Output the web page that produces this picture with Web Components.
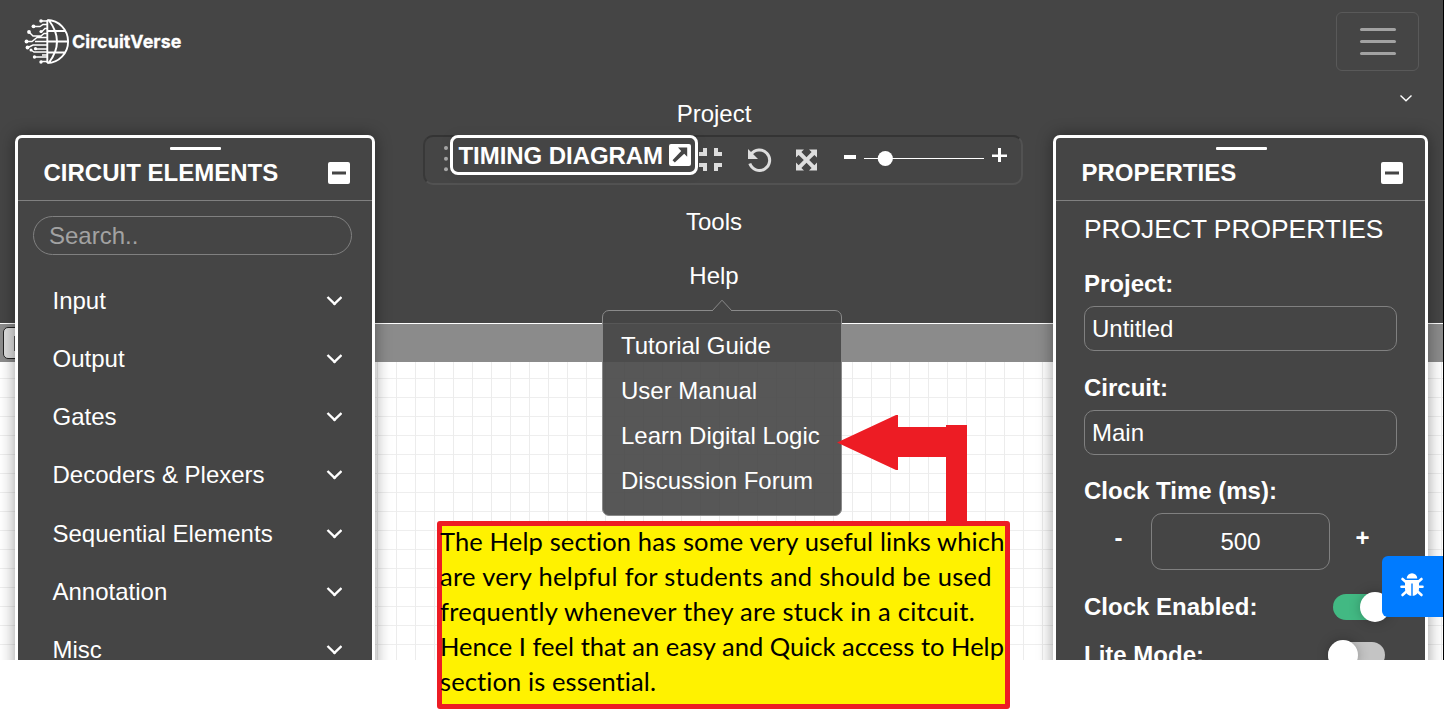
<!DOCTYPE html>
<html lang="en">
<head>
<meta charset="utf-8">
<title>CircuitVerse</title>
<style>
html,body{margin:0;height:100%;background:#fff;overflow:hidden}
body{font-family:"Liberation Sans",Arial,sans-serif;font-size:24px;color:#fff}
</style>
</head>
<body>
<cv-app></cv-app>
<script>
function define(name, html, setup) {
  customElements.define(name, class extends HTMLElement {
    constructor() {
      super();
      const root = this.attachShadow({ mode: 'open' });
      root.innerHTML = '<style>*{box-sizing:border-box}svg{display:block}</style>' + html;
    }
    connectedCallback() { if (setup) setup(this, this.shadowRoot); }
  });
}

/* Single line of text spread over a given width through letter spacing */
define('fit-line', `<style>:host{display:block;white-space:nowrap}span{display:inline-block}</style><span><slot></slot></span>`,
  (el, root) => {
    const s = root.querySelector('span');
    const target = +el.getAttribute('w');
    const n = el.textContent.length;
    const w = s.getBoundingClientRect().width;
    if (w && n) s.style.letterSpacing = ((target - w) / n).toFixed(3) + 'px';
  });

define('cv-logo', `<style>
:host{display:flex;align-items:center;gap:2px;height:48px}
.name{font:700 17.800px/24px Inter,sans-serif;-webkit-text-stroke:.3px #fff;margin-top:1px}
</style>
<svg width="46" height="48" viewBox="0 0 46 48" fill="none" stroke="#fff" stroke-width="1.600">
<g stroke-width="1.900">
<path d="M23.300 3V46M23.300 3A20.800 21.500 0 0 1 23.300 46M25 3.500Q41 24.500 25 45.500M24 14H41M24 24.500H44M24 35.500H41"/></g>
<path stroke-width="1.400" d="M23 4H17M23 7.500H19L16 9.500H9M23 11.500H21L17 15.500M23 16.500H20L17 19H9L5 15M23 20.500H13L8 24.500H2M23 24.500H11M23 28H9L4 30.500M23 32H12M23 35H10L7 33M23 40H10.500M23 38H18M23 44.500H17"/>
<g fill="#fff" stroke="none"><circle cx="17" cy="4" r="1.800"/><circle cx="9.500" cy="9.300" r="1.900"/><circle cx="17" cy="14.500" r="1.600"/><circle cx="5" cy="15" r="1.900"/><circle cx="2.500" cy="24.500" r="1.900"/><circle cx="3.500" cy="30.500" r="1.900"/><circle cx="7" cy="33" r="1.500"/><circle cx="11.500" cy="31.700" r="1.600"/><circle cx="10.500" cy="40" r="1.700"/><circle cx="17" cy="45" r="1.700"/></g>
</svg>
<fit-line class="name" w="109.500">CircuitVerse</fit-line>`);

define('cv-burger', `<style>
:host{display:flex;flex-direction:column;justify-content:center;align-items:center;gap:9px;width:83px;height:59px;border:1px solid #595959;border-radius:6px;box-sizing:border-box}
i{width:36px;height:3px;border-radius:1.500px;background:#a2a2a2}
</style><i></i><i></i><i></i>`);

define('nav-item', `<style>:host{display:block;height:28px;line-height:28px;text-align:center}</style><slot></slot>`);

define('timing-box', `<style>
:host{display:flex;align-items:center;gap:6px;width:248px;height:40px;border:3px solid #fff;border-radius:8px;background:#454545;padding:0 0 0 6px;box-sizing:border-box;font-weight:700;box-shadow:0 0 12px rgba(0,0,0,.08)}
fit-line{margin-top:1px;line-height:28px}
</style><fit-line w="204.500">TIMING DIAGRAM</fit-line>
<svg width="22" height="22" viewBox="0 0 22 22"><rect width="22" height="22" rx="2" fill="#fff"/><path d="M9 3.500h9.200v9.200l-3-3L5.800 18.600 3.500 16.300l8.700-9.400z" fill="#454545"/></svg>`);

define('quick-bar', `<style>
:host{display:block;position:relative;width:600px;height:50px;border:2px solid;border-color:#343434 #525252 #525252 #383838;border-radius:10px;box-sizing:border-box}
.row{display:flex;height:100%;align-items:flex-start}
svg{flex:none}
timing-box{position:absolute;left:25px;top:-2px}
</style>
<div class="row">
<svg width="597" height="46" viewBox="425 137 597 46" fill="#ddd">
<g fill="#a9a9a9"><circle cx="446" cy="148" r="2"/><circle cx="446" cy="158.700" r="2"/><circle cx="446" cy="169.300" r="2"/></g>
<path d="M703 148h4v8h-8v-4h4zM714 148h4v4h4v4h-8zM699 163h8v8h-4v-4h-4zM714 163h8v4h-4v4h-4z"/>
<path d="M751 154.500A10.200 10.200 0 1 1 749.800 163.500" fill="none" stroke="#ddd" stroke-width="3"/>
<path d="M748 149v10h10z"/>
<path d="M796 149.500h8l-2.600 2.600 5.100 5.100 5.100-5.100-2.600-2.600h8v8l-2.600-2.600-5.200 5.100 5.200 5.200 2.600-2.600v8h-8l2.600-2.600-5.100-5.200-5.100 5.200 2.600 2.600h-8v-8l2.600 2.600 5.200-5.200-5.200-5.100-2.600 2.600z"/>
<g fill="#fff"><rect x="844" y="155" width="12" height="4"/><rect x="864" y="158" width="120" height="1"/><circle cx="885.300" cy="158.500" r="7.600"/><path d="M998 148h3v6.500h6v2.500h-6v5h-3v-5h-6v-2.500h6z"/></g>
</svg></div>
<timing-box></timing-box>`);

define('cv-chevron', `<style>:host{display:block}</style><svg width="16" height="12" viewBox="0 0 16 12" fill="none" stroke="#fff" stroke-width="2.400"><path d="M1.500 2 8.500 8.800 15.500 2M7 8.500h3" /></svg>`);

define('cv-nav', `<style>
:host{display:flex;flex-direction:column;height:324px;background:#454545;border-bottom:1px solid #fff}
.top{display:flex;justify-content:space-between;height:82px;padding:12px 24px 0 24px}
cv-logo{margin-top:5px}
.fold{display:flex;justify-content:flex-end;height:18px;padding:12px 30px 0 0}
.menu{display:flex;flex-direction:column;align-items:center;width:1428px}
quick-bar{margin:7px 0 23px 17px}
nav-item+nav-item{margin-top:26px}
</style>
<div class="top"><cv-logo></cv-logo><cv-burger></cv-burger></div>
<div class="fold"><svg width="14" height="8" viewBox="0 0 14 8" fill="none" stroke="#fff" stroke-width="1.400"><path d="M1.500 1.500 7 6.800l5.500-5.300"/></svg></div>
<div class="menu"><nav-item>Project</nav-item><quick-bar></quick-bar><nav-item>Tools</nav-item><nav-item>Help</nav-item></div>`);

define('tab-bar', `<style>
:host{display:flex;height:38px;background:#8b8b8b;padding:3px;box-sizing:border-box}
.tab{width:90px;height:32px;border:1px solid #222;border-radius:5px;background:#ddd;padding:8px 10px}
.tab i{display:block;width:2px;height:15px;background:#555}
</style><div class="tab"><i></i></div>`);

define('grid-canvas', `<style>
:host{display:block;flex:1;background:
linear-gradient(90deg,#ececec 1px,transparent 1px) 16px 0/19px 19px,
linear-gradient(#eee 1px,transparent 1px) 0 16px/19px 19px,#fff}
</style>`);

define('float-panel', `<style>
:host{display:flex;flex-direction:column;box-sizing:border-box;height:600px;border:3px solid #fff;border-radius:7px;background:#454545;box-shadow:0 0 16px rgba(0,0,0,.4)}
.grip{width:51px;height:3px;background:#fff;border-radius:1px;margin:9px auto 0;position:relative;left:var(--grip,0)}
header{display:flex;justify-content:space-between;align-items:center;height:51px;padding:1px 22px 5px 25.500px;font-weight:700;border-bottom:1px solid #808080;flex:none}
</style>
<div class="grip"></div>
<header><slot name="title"></slot><svg width="22" height="22" viewBox="0 0 22 22"><rect width="22" height="22" rx="2" fill="#fff"/><rect x="4" y="9.500" width="14" height="3" fill="#454545"/></svg></header>
<slot></slot>`);

define('search-box', `<style>:host{display:block;margin:15px 20px 17px 15px;height:39px;border:1px solid #808080;border-radius:20px;box-sizing:border-box;padding-left:15px;line-height:38px;color:#a2a2a2}</style><slot></slot>`);
define('element-row', `<style>:host{display:flex;align-items:center;justify-content:space-between;height:58.150px;padding:0 30px 0 34.500px}</style><slot></slot><cv-chevron></cv-chevron>`);

define('text-field', `<style>
:host{display:block}
b{display:block;height:28px;line-height:28px}
div{height:45px;border:1px solid #808080;border-radius:10px;padding-left:7px;line-height:43px;margin-top:8px}
</style><b><slot name="label"></slot></b><div><slot></slot></div>`);

define('clock-field', `<style>
:host{display:block}
b{display:block;height:28px;line-height:28px}
.r{display:flex;margin-top:8px}
.r b{width:67px;height:50px;line-height:50px;text-align:center;padding-left:2px}
.r b:last-child{padding:0 2px 0 0}
.v{width:179px;height:57px;border:1px solid #808080;border-radius:11px;line-height:56px;text-align:center}
</style><b>Clock Time (ms):</b><div class="r"><b>-</b><div class="v"><slot></slot></div><b>+</b></div>`);

define('toggle-row', `<style>
:host{display:flex;justify-content:space-between;align-items:center;height:30px;font-weight:700}
.t{display:flex;align-items:center;justify-content:flex-start;width:57px;height:26px;border-radius:13px;background:#c4c4c4}
.t i{width:30px;height:30px;border-radius:50%;background:#fff;box-shadow:0 0 12px rgba(0,0,0,.25);flex:none}
:host([on]) .t{background:#42b983;justify-content:flex-end}
</style><slot></slot><div class="t"><i></i></div>`);

define('bug-button', `<style>:host{display:flex;align-items:center;justify-content:center;width:61px;height:61px;background:#007bff;border-radius:6px 0 0 6px}</style>
<svg width="24" height="24" viewBox="0 0 24 24" style="margin:-4px 2px 0 0"><g fill="#fff"><path d="M6.700 5.500a5.300 5.300 0 0 1 10.600 0zM5 7h14v9a6.500 6.500 0 0 1-14 0z"/></g><path fill="none" stroke="#fff" stroke-width="2.600" stroke-linecap="round" d="M2.500 6l4 3.500M21.500 6l-4 3.500M1.500 13.800h21M2.500 22l4.500-4M21.500 22l-4.500-4"/><path stroke="#007bff" stroke-width="1.400" d="M12 10.500v12.500"/></svg>`);

define('help-menu', `<style>
:host{display:block;width:240px;height:206px;box-sizing:border-box;border:1px solid #8a8a8a;border-radius:7px;background:rgba(69,69,69,.9);padding:12px 0 0 18px}
svg{position:absolute;left:109px;top:-12px}
div{height:45px;line-height:45px}
</style><svg width="20" height="12" viewBox="0 0 20 12"><path d="M0 12 10 1.200 20 12" fill="#454545" stroke="#8a8a8a"/></svg>
<div>Tutorial Guide</div><div>User Manual</div><div>Learn Digital Logic</div><div>Discussion Forum</div>`);

define('note-box', `<style>
:host{display:block;width:573px;height:188px;box-sizing:border-box;background:#fff200;border:5px solid #ed1c24;border-radius:3px;color:#000;font:25.500px/35px Lato,sans-serif}
fit-line{margin-left:-2px}
fit-line:first-of-type{margin-top:-2px}
</style>
<fit-line w="565">The Help section has some very useful links which</fit-line>
<fit-line w="552">are very helpful for students and should be used</fit-line>
<fit-line w="535">frequently whenever they are stuck in a citcuit.</fit-line>
<fit-line w="564">Hence I feel that an easy and Quick access to Help</fit-line>
<fit-line w="217">section is essential.</fit-line>`);

define('cv-app', `<style>
:host{display:block;position:relative;width:1444px;height:719px}
.stage{position:relative;display:flex;flex-direction:column;height:660px;overflow:hidden;border-right:1px solid #000}
cv-nav{height:324px;flex:none}
.left,.right,help-menu,bug-button,note-box,.arrow{position:absolute}
.left{left:15px;top:135px;width:360px}
.right{left:1053px;top:135px;width:375px;--grip:1px}
help-menu{left:602px;top:310px}
bug-button{left:1382px;top:556px}
.arrow{left:830px;top:410px}
note-box{left:437px;top:521px}
.props{padding:14px 28px 0 28px}
.props h3{margin:0;font-weight:400;font-size:26.360px;line-height:28px;height:28px}
text-field{margin-top:27px}
text-field+text-field{margin-top:23px}
clock-field{margin-top:22px}
toggle-row{margin-top:22px;margin-right:7px}
toggle-row+toggle-row{margin-top:18px;margin-right:12px}
</style>
<div class="stage">
<cv-nav></cv-nav><tab-bar></tab-bar><grid-canvas></grid-canvas>
<float-panel class="left"><span slot="title">CIRCUIT ELEMENTS</span>
<search-box>Search..</search-box>
<element-row>Input</element-row><element-row>Output</element-row><element-row>Gates</element-row><element-row>Decoders &amp; Plexers</element-row><element-row>Sequential Elements</element-row><element-row>Annotation</element-row><element-row>Misc</element-row>
</float-panel>
<float-panel class="right"><span slot="title">PROPERTIES</span>
<div class="props"><h3>PROJECT PROPERTIES</h3>
<text-field><span slot="label">Project:</span>Untitled</text-field>
<text-field><span slot="label">Circuit:</span>Main</text-field>
<clock-field>500</clock-field>
<toggle-row on>Clock Enabled:</toggle-row><toggle-row>Lite Mode:</toggle-row></div>
</float-panel>
<help-menu></help-menu>
<bug-button></bug-button>
</div>
<svg class="arrow" width="140" height="115" viewBox="830 410 140 115"><path fill="#ed1c24" d="M837 442.500 896 415h2v12h48v-2h21v98h-21v-66h-48v13h-2z"/></svg>
<note-box></note-box>`);
</script>
</body>
</html>
